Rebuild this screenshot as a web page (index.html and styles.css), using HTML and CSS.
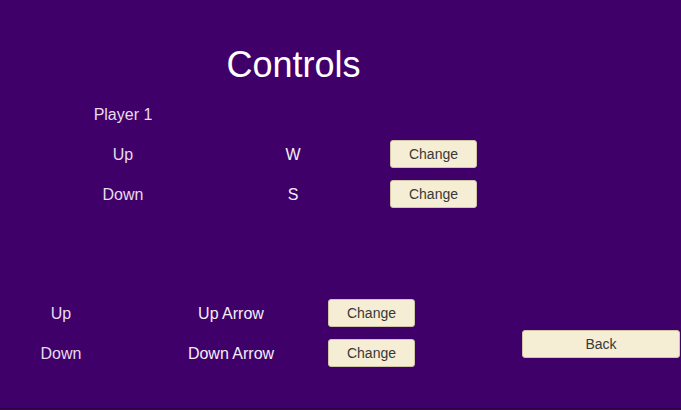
FILE: index.html
```html
<!DOCTYPE html>
<html>
<head>
<meta charset="utf-8">
<link rel="stylesheet" href="styles.css">
</head>
<body>
  <h1 class="title">Controls</h1>
  <div class="controls controls-p1">
    <div class="label player">Player 1</div>
    <div></div>
    <div></div>
    <div class="label">Up</div>
    <div class="key">W</div>
    <button class="btn btn-change">Change</button>
    <div class="label">Down</div>
    <div class="key">S</div>
    <button class="btn btn-change">Change</button>
  </div>
  <div class="bottom">
    <div class="controls controls-p2">
      <div class="label">Up</div>
      <div class="key">Up Arrow</div>
      <button class="btn btn-change">Change</button>
      <div class="label">Down</div>
      <div class="key">Down Arrow</div>
      <button class="btn btn-change">Change</button>
    </div>
    <button class="btn btn-back">Back</button>
  </div>
</body>
</html>
```

FILE: styles.css
```css
html {
  background: #40006a;
}
body {
  margin: 0;
  height: 408px;
  border-bottom: 1px solid #29003f;
  font-family: "Liberation Sans", Arial, sans-serif;
  color: #ece4f2;
  overflow: hidden;
}
.title {
  margin: 0;
  padding-top: 45px;
  width: 587px;
  text-align: center;
  font-size: 36px;
  line-height: 40px;
  font-weight: normal;
  color: #ffffff;
}
.controls {
  display: grid;
  grid-template-columns: 170px 170px 111px;
  grid-auto-rows: 40px;
  align-items: center;
  justify-items: center;
  font-size: 16px;
  line-height: 20px;
}
.controls-p1 {
  margin-top: 9px;
  margin-left: 38px;
}
.controls-p2 {
  margin-left: -24px;
}
.label {
  padding-top: 2px;
  color: #e6dcee;
}
.key {
  padding-top: 2px;
  color: #f4eef8;
}
.bottom {
  display: flex;
  align-items: flex-start;
  margin-top: 79px;
}
.btn {
  font-family: "Liberation Sans", Arial, sans-serif;
  font-size: 14px;
  color: #383838;
  background: #f5eed5;
  border: 1px solid #cfc6a8;
  border-radius: 3px;
  height: 28px;
  padding: 0;
  box-sizing: border-box;
}
.btn-change {
  width: 87px;
}
.btn-back {
  margin-left: auto;
  margin-right: 1px;
  margin-top: 37px;
  width: 158px;
}
```
